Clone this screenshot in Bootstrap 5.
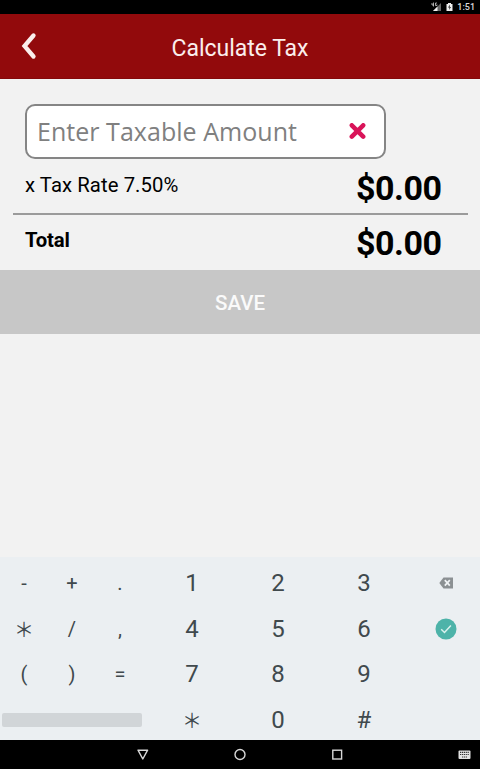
<!DOCTYPE html>
<html lang="en">
<head>
<meta charset="utf-8">
<meta name="viewport" content="width=device-width, initial-scale=1">
<title>Calculate Tax</title>
<link href="https://cdn.jsdelivr.net/npm/bootstrap@5.3.0/dist/css/bootstrap.min.css" rel="stylesheet">
<style>
  body { font-family: Roboto, sans-serif; background: #f2f2f2; color: #000; height: 769px; overflow: hidden; }
  svg { display: block; flex: none; }
  .statusbar { height: 14px; font-size: 9px; font-weight: 500; line-height: 14px; padding-right: 5px; color: #ddd; }
  .appbar { height: 65px; background: #920a0c; color: #fbeeec; padding: 0 21px; border-bottom: 1px solid #84090b; }
  .appbar h1 { font-size: 23px; line-height: 28px; margin: 5px 0 0; letter-spacing: -.03px; }
  .side { width: 16px; }
  .tax-form { height: 191px; padding: 25px 12px 0 13px; }
  .amount-box { width: 361px; height: 55px; margin-left: 12px; background: #fff; border: 2px solid #858585; border-radius: 10px; padding: 0 18px 0 10px; }
  .amount-box input { font-family: "Open Sans", "Noto Sans", sans-serif; font-size: 25px; letter-spacing: .04px; padding: 0; width: 285px; height: 38px; line-height: 38px; margin-bottom: 2px; }
  .amount-box input::placeholder { color: #808080; opacity: 1; }
  .line { height: 55px; padding: 0 26px 0 12px; font-size: 20.3px; line-height: 30px; }
  .line.rate { height: 56px; border-bottom: 2px solid #9b9b9b; }
  .rate-label { margin-top: -2px; letter-spacing: .08px; }
  .money { font-size: 34px; font-weight: 700; letter-spacing: -.5px; margin: 3px .5px 0 0; }
  .total-label { font-weight: 700; letter-spacing: -.1px; margin-top: -3px; }
  .line.total { height: 53px; }
  .save { height: 64px; background: #c7c7c7; color: #fafafa; font-size: 20.500px; font-weight: 500; padding: 2px 0 0; }
  .save:hover { background: #c7c7c7; color: #fafafa; }
  .keypad { height: 183px; padding-top: 3.5px; display: grid; grid-template-columns: 48px 48px 48px 5px 86px 86px 86px 78px; grid-template-rows: repeat(4, 45.6px); background: #ebeff2; color: #40494d; font-size: 24px; width: 486px; }
  .keypad > * { display: flex; align-items: center; justify-content: center; line-height: 1; }
  .sym { font-size: 20px; }
  .star { font-family: "Noto Sans CJK SC", sans-serif; font-size: 20px; }
  .c5 { grid-column: 5; }
  .space-key { grid-column: 1 / span 3; justify-content: flex-start !important; padding-left: 2px; }
  .space-key span { width: 140px; height: 14px; border-radius: 2px; background: #d1d5d8; }
  .navkeys { height: 29px; }
</style>
</head>
<body class="d-flex flex-column">
<div class="statusbar bg-black d-flex justify-content-end align-items-center flex-shrink-0">
  <svg width="11" height="10" viewBox="0 0 11 10"><path d="M10 1v8H2z" fill="#666"/><path d="M6.5 4.5V9H2z" fill="#eee"/><path d="M1 1v2h2M2.500.500v4M6 1H4.500v2.500H6V2.500" stroke="#ccc" stroke-width=".8" fill="none"/></svg>
  <svg class="ms-1" width="7" height="10" viewBox="0 0 7 10"><path d="M2 1h3v1h1.500v7H.5V2H2z" fill="#eee"/><path d="M4 2.500L2 5.500h1.500L3 8l2-3H3.700z" fill="#222"/></svg>
  <span class="ms-1">1:51</span>
</div>
<header class="appbar d-flex align-items-center justify-content-between flex-shrink-0">
  <svg class="side" width="16" height="28" viewBox="0 0 16 28"><path d="M12.500 3.500L3.500 14l9 10.500" fill="none" stroke="#fbeeec" stroke-width="4.300" stroke-linecap="round" stroke-linejoin="miter"/></svg>
  <h1 class="fw-normal">Calculate Tax</h1>
  <span class="side"></span>
</header>
<main class="flex-grow-1 d-flex flex-column">
  <section class="tax-form">
    <div class="amount-box d-flex align-items-center justify-content-between">
      <input class="border-0 bg-transparent" type="text" placeholder="Enter Taxable Amount" aria-label="Taxable amount">
      <svg width="17" height="17" viewBox="0 0 17 17"><path d="M2.800 2.300l11.400 11.400M14.200 2.300L2.800 13.700" stroke="#d91459" stroke-width="4.500" stroke-linecap="round"/></svg>
    </div>
    <div class="line rate d-flex align-items-center justify-content-between"><span class="rate-label">x Tax Rate 7.50%</span><span class="money">$0.00</span></div>
    <div class="line total d-flex align-items-center justify-content-between"><span class="total-label">Total</span><span class="money">$0.00</span></div>
  </section>
  <button class="btn save w-100 border-0 rounded-0" type="button">SAVE</button>
</main>
<section class="keypad flex-shrink-0">
  <span class="sym">-</span><span class="sym">+</span><span class="sym">.</span><span class="c5">1</span><span>2</span><span>3</span>
  <span><svg width="14" height="12" viewBox="0 0 14 12"><path d="M4.500.5H14v11H4.500L.3 6z" fill="#8b9093"/><path d="M5.800 3.200l5 5.400M10.800 3.200l-5 5.400" stroke="#f0f3f5" stroke-width="1.700"/></svg></span>
  <span class="star">&#xFF0A;</span><span class="sym">/</span><span class="sym">,</span><span class="c5">4</span><span>5</span><span>6</span>
  <span><svg width="22" height="22" viewBox="0 0 22 22"><circle cx="11" cy="11" r="10.500" fill="#4db3a9"/><path d="M6.200 11.300l3.300 3.200 6.400-7" fill="none" stroke="#d9f2ee" stroke-width="1.500"/></svg></span>
  <span class="sym">(</span><span class="sym">)</span><span class="sym">=</span><span class="c5">7</span><span>8</span><span>9</span><span></span>
  <span class="space-key"><span></span></span><span class="c5 star">&#xFF0A;</span><span>0</span><span>#</span><span></span>
</section>
<nav class="navkeys bg-black d-flex align-items-center flex-shrink-0">
  <svg width="480" height="29" viewBox="0 0 480 29" fill="none" stroke="#d8d8d8" stroke-width="1.400"><path d="M138 10.200h9.600l-4.800 8.800z" stroke-linejoin="round"/><circle cx="240" cy="14.500" r="5"/><rect x="332.800" y="10.200" width="8.800" height="8.800"/><g stroke="none"><rect x="458.500" y="10.500" width="12" height="8.500" rx="1" fill="#e2e2e2"/><path d="M460 12.300h9M460 14.500h9M462 17h5" stroke="#333" stroke-width="1.200" stroke-dasharray="1.200 .7"/></g></svg>
</nav>
<script src="https://cdn.jsdelivr.net/npm/bootstrap@5.3.0/dist/js/bootstrap.bundle.min.js"></script>
</body>
</html>
